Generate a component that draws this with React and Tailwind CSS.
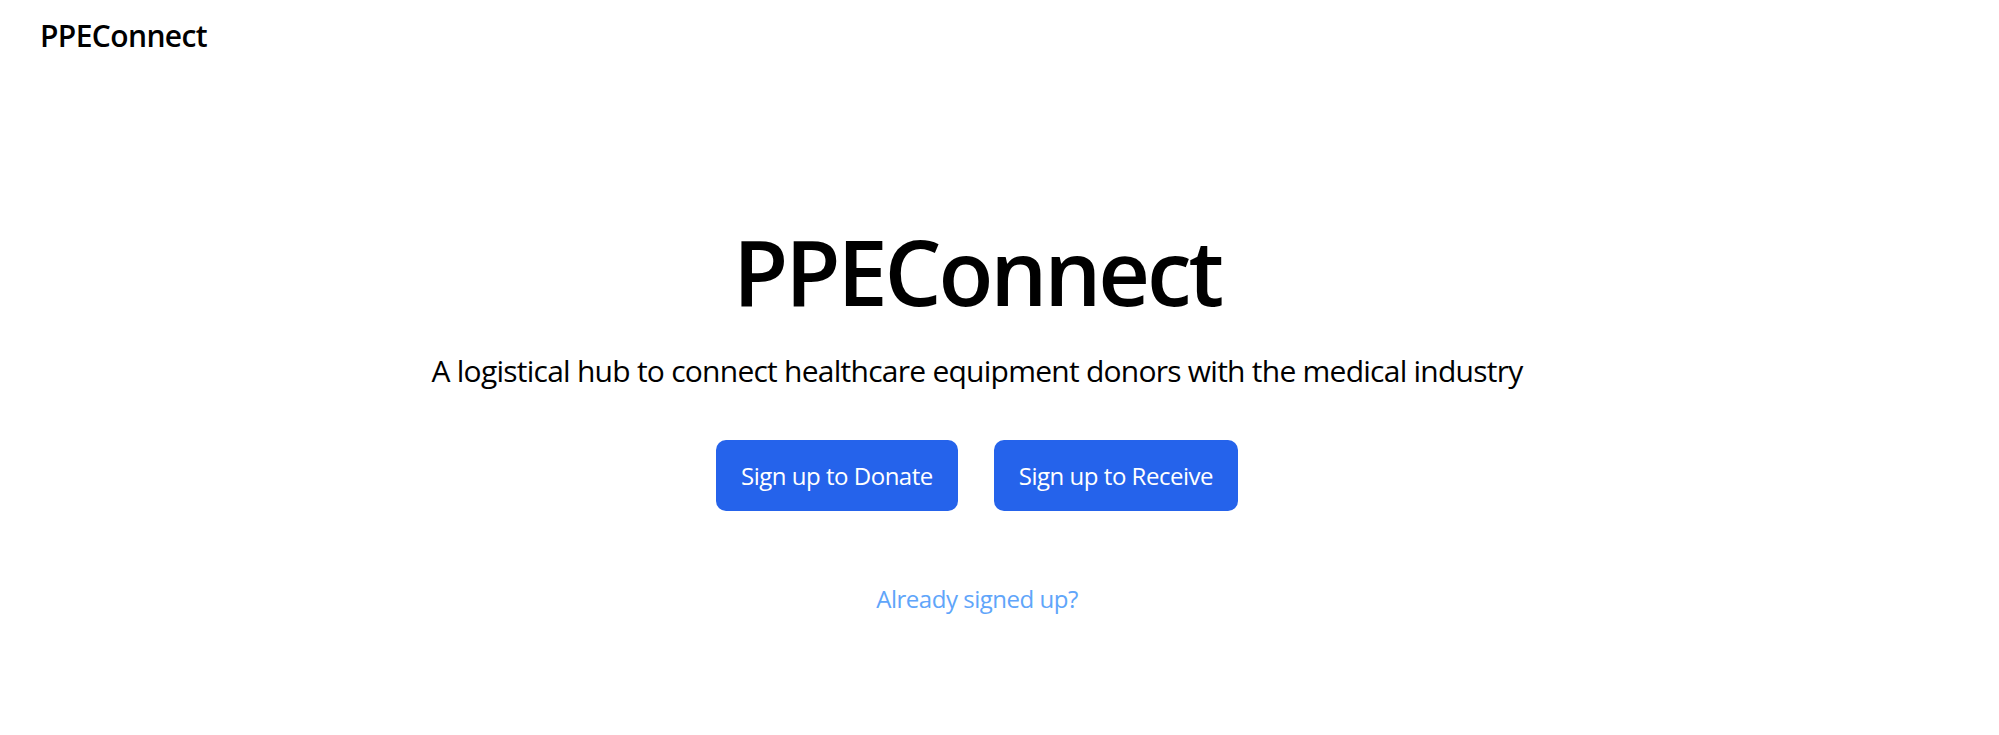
import React from 'react';

const font = { fontFamily: '"Open Sans", "Noto Sans", sans-serif' };

const App = () => {
  return (
    <div className="min-h-screen bg-white text-black" style={font}>
      {/* header */}
      <header className="px-10 pt-[18px]">
        <div className="text-[30px] leading-9 font-semibold tracking-[-0.02em]">PPEConnect</div>
      </header>

      {/* hero */}
      <main className="flex flex-col items-center pt-[172px] pr-[45px]">
        <h1 className="text-[90px] leading-none font-semibold tracking-[-0.035em]">PPEConnect</h1>
        <p className="mt-[37px] text-[30px] leading-9 tracking-[-0.025em]">
          A logistical hub to connect healthcare equipment donors with the medical industry
        </p>
        <div className="mt-[51px] flex gap-9">
          <button className="h-[71px] px-[25px] rounded-[10px] bg-[#2563eb] text-white text-[24px] leading-8 tracking-[-0.02em]">
            Sign up to Donate
          </button>
          <button className="h-[71px] px-[25px] rounded-[10px] bg-[#2563eb] text-white text-[24px] leading-8 tracking-[-0.02em]">
            Sign up to Receive
          </button>
        </div>
        <a href="#" className="mt-[72px] text-[24px] leading-8 text-[#60a5fa] tracking-[-0.02em]">
          Already signed up?
        </a>
      </main>
    </div>
  );
};

export default App;
